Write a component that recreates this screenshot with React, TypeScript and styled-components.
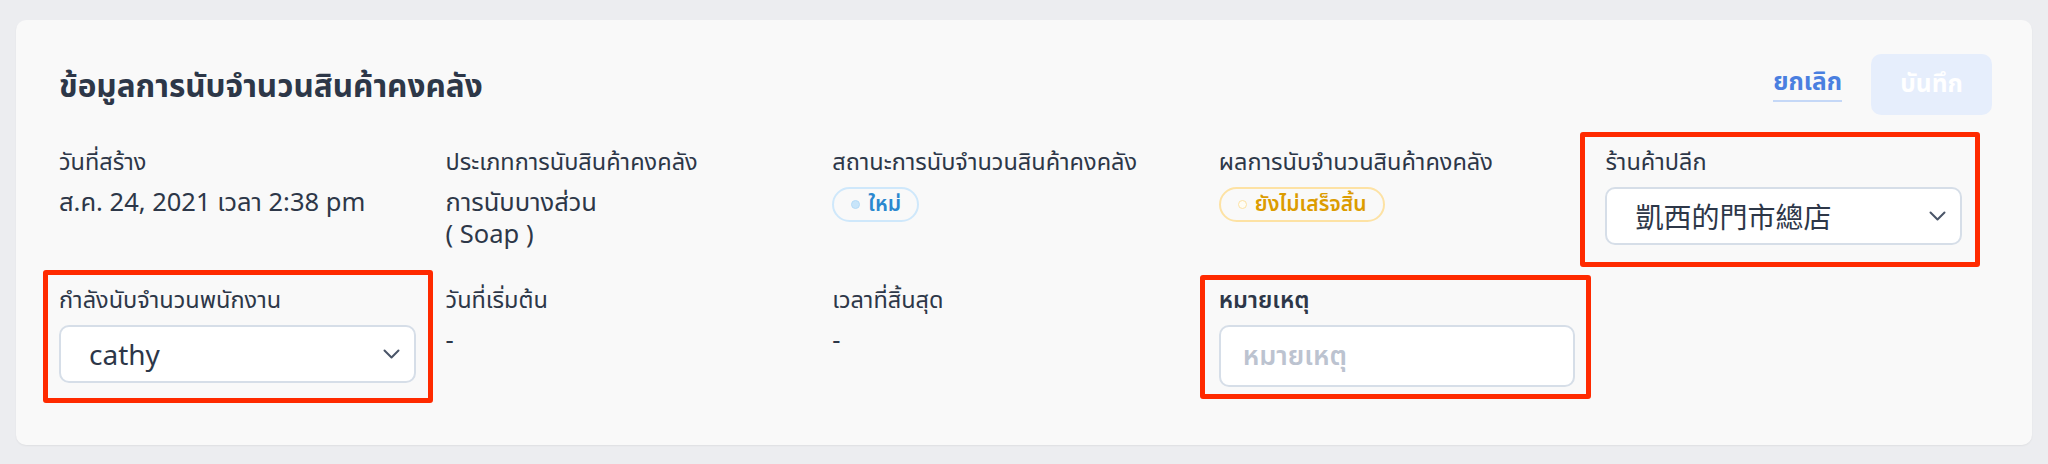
import React from "react";
import styled, { createGlobalStyle } from "styled-components";

const GlobalStyle = createGlobalStyle`
  html, body {
    margin: 0;
    padding: 0;
    background: #ecedf0;
  }
  body {
    font-family: "Noto Sans Thai", "Noto Sans", "Noto Sans CJK TC", sans-serif;
    color: #2d3748;
  }
  * { box-sizing: border-box; }
`;

const Page = styled.div`
  width: 2048px;
  height: 464px;
  padding: 20px 16px 19px;
`;

const Card = styled.section`
  height: 425px;
  background: #f9f9f9;
  border-radius: 10px;
  box-shadow: 0 1px 2px rgba(0, 0, 0, 0.06);
  padding: 34px 40px 0 43px;
`;

const Header = styled.header`
  display: flex;
  align-items: center;
  justify-content: space-between;
  height: 61px;
`;

const Title = styled.h1`
  margin: 0;
  font-size: 31.5px;
  font-weight: 700;
  color: #2d3748;
  line-height: 40px;
  padding-top: 6px;
`;

const Actions = styled.div`
  display: flex;
  align-items: center;
  gap: 29px;
`;

const CancelLink = styled.a`
  font-size: 24.5px;
  font-weight: 700;
  color: #4a7fe0;
  line-height: 30px;
  padding-bottom: 2px;
  border-bottom: 2px solid #c5d8f7;
  cursor: pointer;
`;

const SaveButton = styled.button`
  height: 61px;
  width: 121px;
  border: none;
  border-radius: 10px;
  background: #e6eefc;
  color: #ffffff;
  font-family: inherit;
  font-size: 24.5px;
  font-weight: 700;
`;

const Grid = styled.div`
  display: grid;
  grid-template-columns: repeat(5, 1fr);
  row-gap: 35px;
  margin-top: 33px;
`;

const Field = styled.div`
  position: relative;
  display: flex;
  flex-direction: column;
  align-items: flex-start;
  gap: 9px;
  padding-right: 30px;
`;

const Label = styled.div<{ $strong?: boolean }>`
  font-size: 23.5px;
  line-height: 30px;
  color: #2d3748;
  font-weight: ${(p) => (p.$strong ? 600 : 400)};
`;

const Value = styled.div`
  font-size: 25.5px;
  line-height: 32px;
  color: #2d3748;
`;

const Badge = styled.span<{ $tone: "blue" | "amber" }>`
  display: inline-flex;
  align-items: center;
  gap: 8px;
  height: 35px;
  padding: 0 16px 0 17px;
  border-radius: 18px;
  border: 2px solid ${(p) => (p.$tone === "blue" ? "#cfe8fb" : "#fde2a4")};
  color: ${(p) => (p.$tone === "blue" ? "#2b88cf" : "#dc9c00")};
  font-size: 21px;
  font-weight: 600;
  line-height: 1;
`;

const Dot = styled.span<{ $tone: "blue" | "amber" }>`
  width: 9px;
  height: 9px;
  border-radius: 50%;
  background: ${(p) => (p.$tone === "blue" ? "#c8e5fa" : "#fffdf5")};
  border: 1px solid ${(p) => (p.$tone === "blue" ? "#b5dbf7" : "#fde2a4")};
`;

const SelectBox = styled.div`
  width: 100%;
  height: 58px;
  display: flex;
  align-items: center;
  justify-content: space-between;
  background: #ffffff;
  border: 2px solid #d6dee8;
  border-radius: 10px;
  padding: 0 14px 0 28px;
  font-size: 28px;
  color: #2d3748;
`;

const SelectText = styled.span`
  font-family: "Noto Sans", "Noto Sans CJK TC", sans-serif;
`;

const TextInput = styled.input`
  width: 100%;
  height: 62px;
  background: #ffffff;
  border: 2px solid #d6dee8;
  border-radius: 10px;
  padding: 0 22px;
  font-family: inherit;
  font-size: 27px;
  font-weight: 600;
  color: #2d3748;
  outline: none;
  &::placeholder {
    color: #bcc3d0;
  }
`;

const Highlight = styled.div<{ $l: number; $r: number; $t: number; $b: number }>`
  position: absolute;
  left: ${(p) => -p.$l}px;
  right: ${(p) => 30 - p.$r}px;
  top: ${(p) => -p.$t}px;
  bottom: ${(p) => -p.$b}px;
  border: 5px solid #ff2a00;
  border-radius: 3px;
  pointer-events: none;
`;

const Chevron = () => (
  <svg width="17" height="10" viewBox="0 0 17 10" fill="none">
    <polyline
      points="1.5,1.5 8.5,8.5 15.5,1.5"
      stroke="#4a5568"
      strokeWidth="2"
      strokeLinecap="round"
      strokeLinejoin="round"
    />
  </svg>
);

export default function App() {
  return (
    <>
      <GlobalStyle />
      <Page>
        <Card>
          <Header>
            <Title>ข้อมูลการนับจำนวนสินค้าคงคลัง</Title>
            <Actions>
              <CancelLink>ยกเลิก</CancelLink>
              <SaveButton>บันทึก</SaveButton>
            </Actions>
          </Header>
          <Grid>
            <Field>
              <Label>วันที่สร้าง</Label>
              <Value>ส.ค. 24, 2021 เวลา 2:38 pm</Value>
            </Field>
            <Field>
              <Label>ประเภทการนับสินค้าคงคลัง</Label>
              <Value>
                การนับบางส่วน
                <br />( Soap )
              </Value>
            </Field>
            <Field>
              <Label>สถานะการนับจำนวนสินค้าคงคลัง</Label>
              <Badge $tone="blue">
                <Dot $tone="blue" />
                ใหม่
              </Badge>
            </Field>
            <Field>
              <Label>ผลการนับจำนวนสินค้าคงคลัง</Label>
              <Badge $tone="amber">
                <Dot $tone="amber" />
                ยังไม่เสร็จสิ้น
              </Badge>
            </Field>
            <Field>
              <Highlight $l={25} $r={18} $t={16} $b={16} />
              <Label>ร้านค้าปลีก</Label>
              <SelectBox>
                <SelectText>凱西的門市總店</SelectText>
                <Chevron />
              </SelectBox>
            </Field>
            <Field>
              <Highlight $l={16} $r={17} $t={16} $b={16} />
              <Label>กำลังนับจำนวนพนักงาน</Label>
              <SelectBox>
                <SelectText>cathy</SelectText>
                <Chevron />
              </SelectBox>
            </Field>
            <Field>
              <Label>วันที่เริ่มต้น</Label>
              <Value>-</Value>
            </Field>
            <Field>
              <Label>เวลาที่สิ้นสุด</Label>
              <Value>-</Value>
            </Field>
            <Field>
              <Highlight $l={19} $r={16} $t={11} $b={12} />
              <Label $strong>หมายเหตุ</Label>
              <TextInput placeholder="หมายเหตุ" />
            </Field>
          </Grid>
        </Card>
      </Page>
    </>
  );
}
